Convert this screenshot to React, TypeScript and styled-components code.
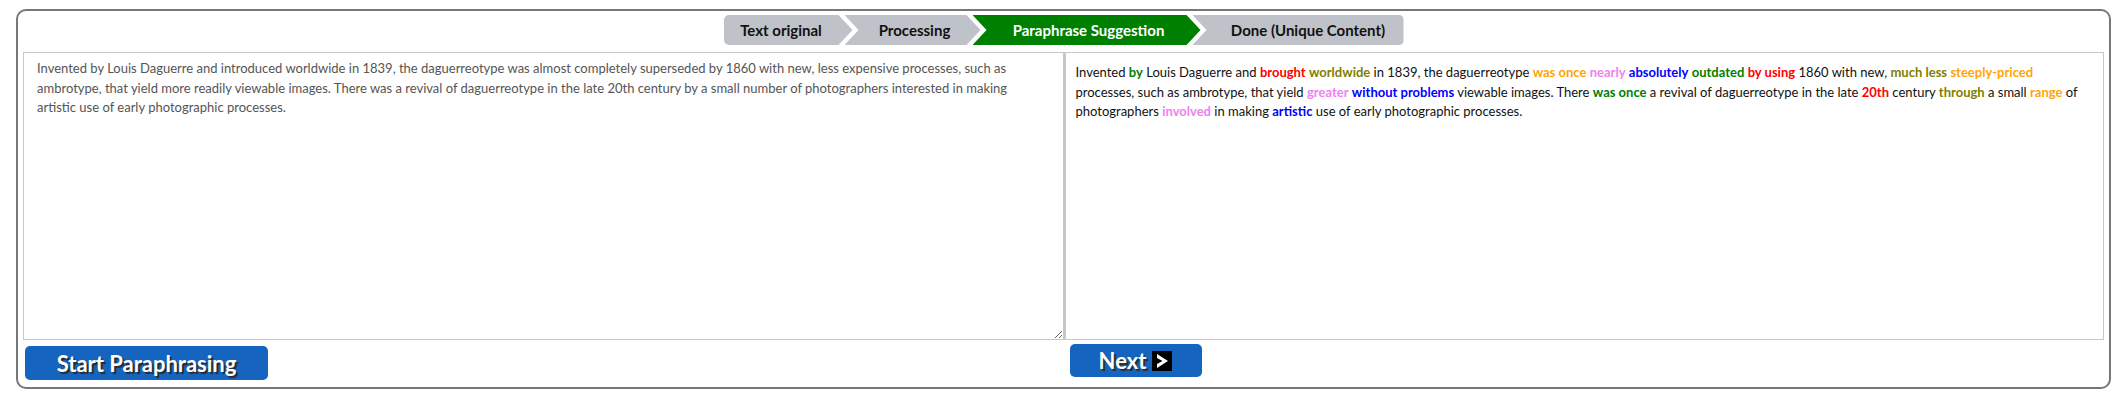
import React from "react";
import styled, { createGlobalStyle, css } from "styled-components";

const GlobalStyle = createGlobalStyle`
  html, body {
    margin: 0;
    padding: 0;
    background: #fff;
    font-family: Lato, "Open Sans", sans-serif;
  }
`;

const Frame = styled.div`
  margin: 9px 15px 0 16px;
  height: 380px;
  box-sizing: border-box;
  border: 2px solid #777;
  border-radius: 10px;
  padding: 4px 5px 0 5px;
  display: flex;
  flex-direction: column;
`;

const Steps = styled.div`
  display: flex;
  justify-content: center;
  height: 30px;
`;

type StepPos = "first" | "mid" | "last";

const arrow = 14;

const clips: Record<StepPos, string> = {
  first: `polygon(0 0, calc(100% - ${arrow}px) 0, 100% 50%, calc(100% - ${arrow}px) 100%, 0 100%)`,
  mid: `polygon(0 0, calc(100% - ${arrow}px) 0, 100% 50%, calc(100% - ${arrow}px) 100%, 0 100%, ${arrow}px 50%)`,
  last: `polygon(0 0, 100% 0, 100% 100%, 0 100%, ${arrow}px 50%)`,
};

const Step = styled.div<{ $w: number; $pos: StepPos; $active?: boolean }>`
  width: ${(p) => p.$w}px;
  box-sizing: border-box;
  display: flex;
  align-items: center;
  justify-content: center;
  font-weight: 700;
  font-size: 15px;
  white-space: nowrap;
  color: ${(p) => (p.$active ? "#fff" : "#111")};
  background: ${(p) => (p.$active ? "#008000" : "#bfc3c9")};
  clip-path: ${(p) => clips[p.$pos]};
  ${(p) =>
    p.$pos === "first"
      ? css`
          border-radius: 5px 0 0 5px;
          padding-right: ${arrow}px;
        `
      : p.$pos === "last"
      ? css`
          margin-left: -8px;
          border-radius: 0 5px 5px 0;
          padding-left: ${arrow + 6}px;
        `
      : css`
          margin-left: -8px;
          padding-left: ${arrow + 4}px;
          padding-right: ${arrow}px;
        `}
`;

const Panels = styled.div`
  margin-top: 7px;
  display: grid;
  grid-template-columns: 1fr 1fr;
  height: 288px;
`;

const Source = styled.textarea`
  box-sizing: border-box;
  width: 100%;
  height: 100%;
  margin: 0;
  border: 1px solid #c8c8c8;
  padding: 6px 25px 6px 13px;
  font-family: Lato, "Open Sans", sans-serif;
  font-size: 13px;
  line-height: 19.5px;
  color: #555;
  resize: both;
  outline: none;
`;

const Result = styled.div`
  box-sizing: border-box;
  height: 100%;
  border: 1px solid #c8c8c8;
  border-left-width: 2px;
  padding: 10px 10px;
  font-size: 13px;
  line-height: 19.5px;
  color: #111;
`;

const Word = styled.b<{ $c: string }>`
  color: ${(p) => p.$c};
  font-weight: 700;
`;

const Actions = styled.div`
  display: grid;
  grid-template-columns: 1fr 1fr;
  align-items: start;
`;

const Button = styled.button<{ $w: number; $h: number; $top: number; $left: number }>`
  width: ${(p) => p.$w}px;
  height: ${(p) => p.$h}px;
  margin: ${(p) => p.$top}px 0 0 ${(p) => p.$left}px;
  border: none;
  border-radius: 5px;
  background: #1565c0;
  color: #fff;
  font-family: Lato, "Open Sans", sans-serif;
  font-weight: 700;
  font-size: 22px;
  text-shadow: 2px 2px 1px #2a2a2a;
  display: flex;
  align-items: center;
  justify-content: center;
  gap: 6px;
  padding: 0;
  cursor: pointer;
`;

const NextIcon = () => (
  <svg width="20" height="20" viewBox="0 0 20 20">
    <rect width="20" height="20" fill="#000" />
    <path d="M5 3 L16 10 L5 17 L5 13 L10.5 10 L5 7 Z" fill="#fff" />
  </svg>
);

const source =
  "Invented by Louis Daguerre and introduced worldwide in 1839, the daguerreotype was almost completely superseded by 1860 with new, less expensive processes, such as ambrotype, that yield more readily viewable images. There was a revival of daguerreotype in the late 20th century by a small number of photographers interested in making artistic use of early photographic processes.";

const green = "#008000";
const red = "#ff0000";
const olive = "#808000";
const orange = "#ffa500";
const violet = "#ee82ee";
const blue = "#0000ff";

const App: React.FunctionComponent = () => {
  return (
    <>
      <GlobalStyle />
      <Frame>
        <Steps>
          <Step $w={129} $pos="first">Text original</Step>
          <Step $w={136} $pos="mid">Processing</Step>
          <Step $w={228} $pos="mid" $active>
            Paraphrase Suggestion
          </Step>
          <Step $w={211} $pos="last">Done (Unique Content)</Step>
        </Steps>
        <Panels>
          <Source defaultValue={source} />
          <Result>
            Invented <Word $c={green}>by</Word> Louis Daguerre and{" "}
            <Word $c={red}>brought</Word> <Word $c={olive}>worldwide</Word> in 1839, the
            daguerreotype <Word $c={orange}>was once</Word> <Word $c={violet}>nearly</Word>{" "}
            <Word $c={blue}>absolutely</Word> <Word $c={green}>outdated</Word>{" "}
            <Word $c={red}>by using</Word> 1860 with new, <Word $c={olive}>much less</Word>{" "}
            <Word $c={orange}>steeply-priced</Word> processes, such as ambrotype, that yield{" "}
            <Word $c={violet}>greater</Word> <Word $c={blue}>without problems</Word> viewable
            images. There <Word $c={green}>was once</Word> a revival of daguerreotype in the late{" "}
            <Word $c={red}>20th</Word> century <Word $c={olive}>through</Word> a small{" "}
            <Word $c={orange}>range</Word> of photographers <Word $c={violet}>involved</Word> in
            making <Word $c={blue}>artistic</Word> use of early photographic processes.
          </Result>
        </Panels>
        <Actions>
          <Button $w={243} $h={34} $top={6} $left={2}>
            Start Paraphrasing
          </Button>
          <Button $w={132} $h={33} $top={4} $left={6}>
            Next <NextIcon />
          </Button>
        </Actions>
      </Frame>
    </>
  );
};

export default App;
